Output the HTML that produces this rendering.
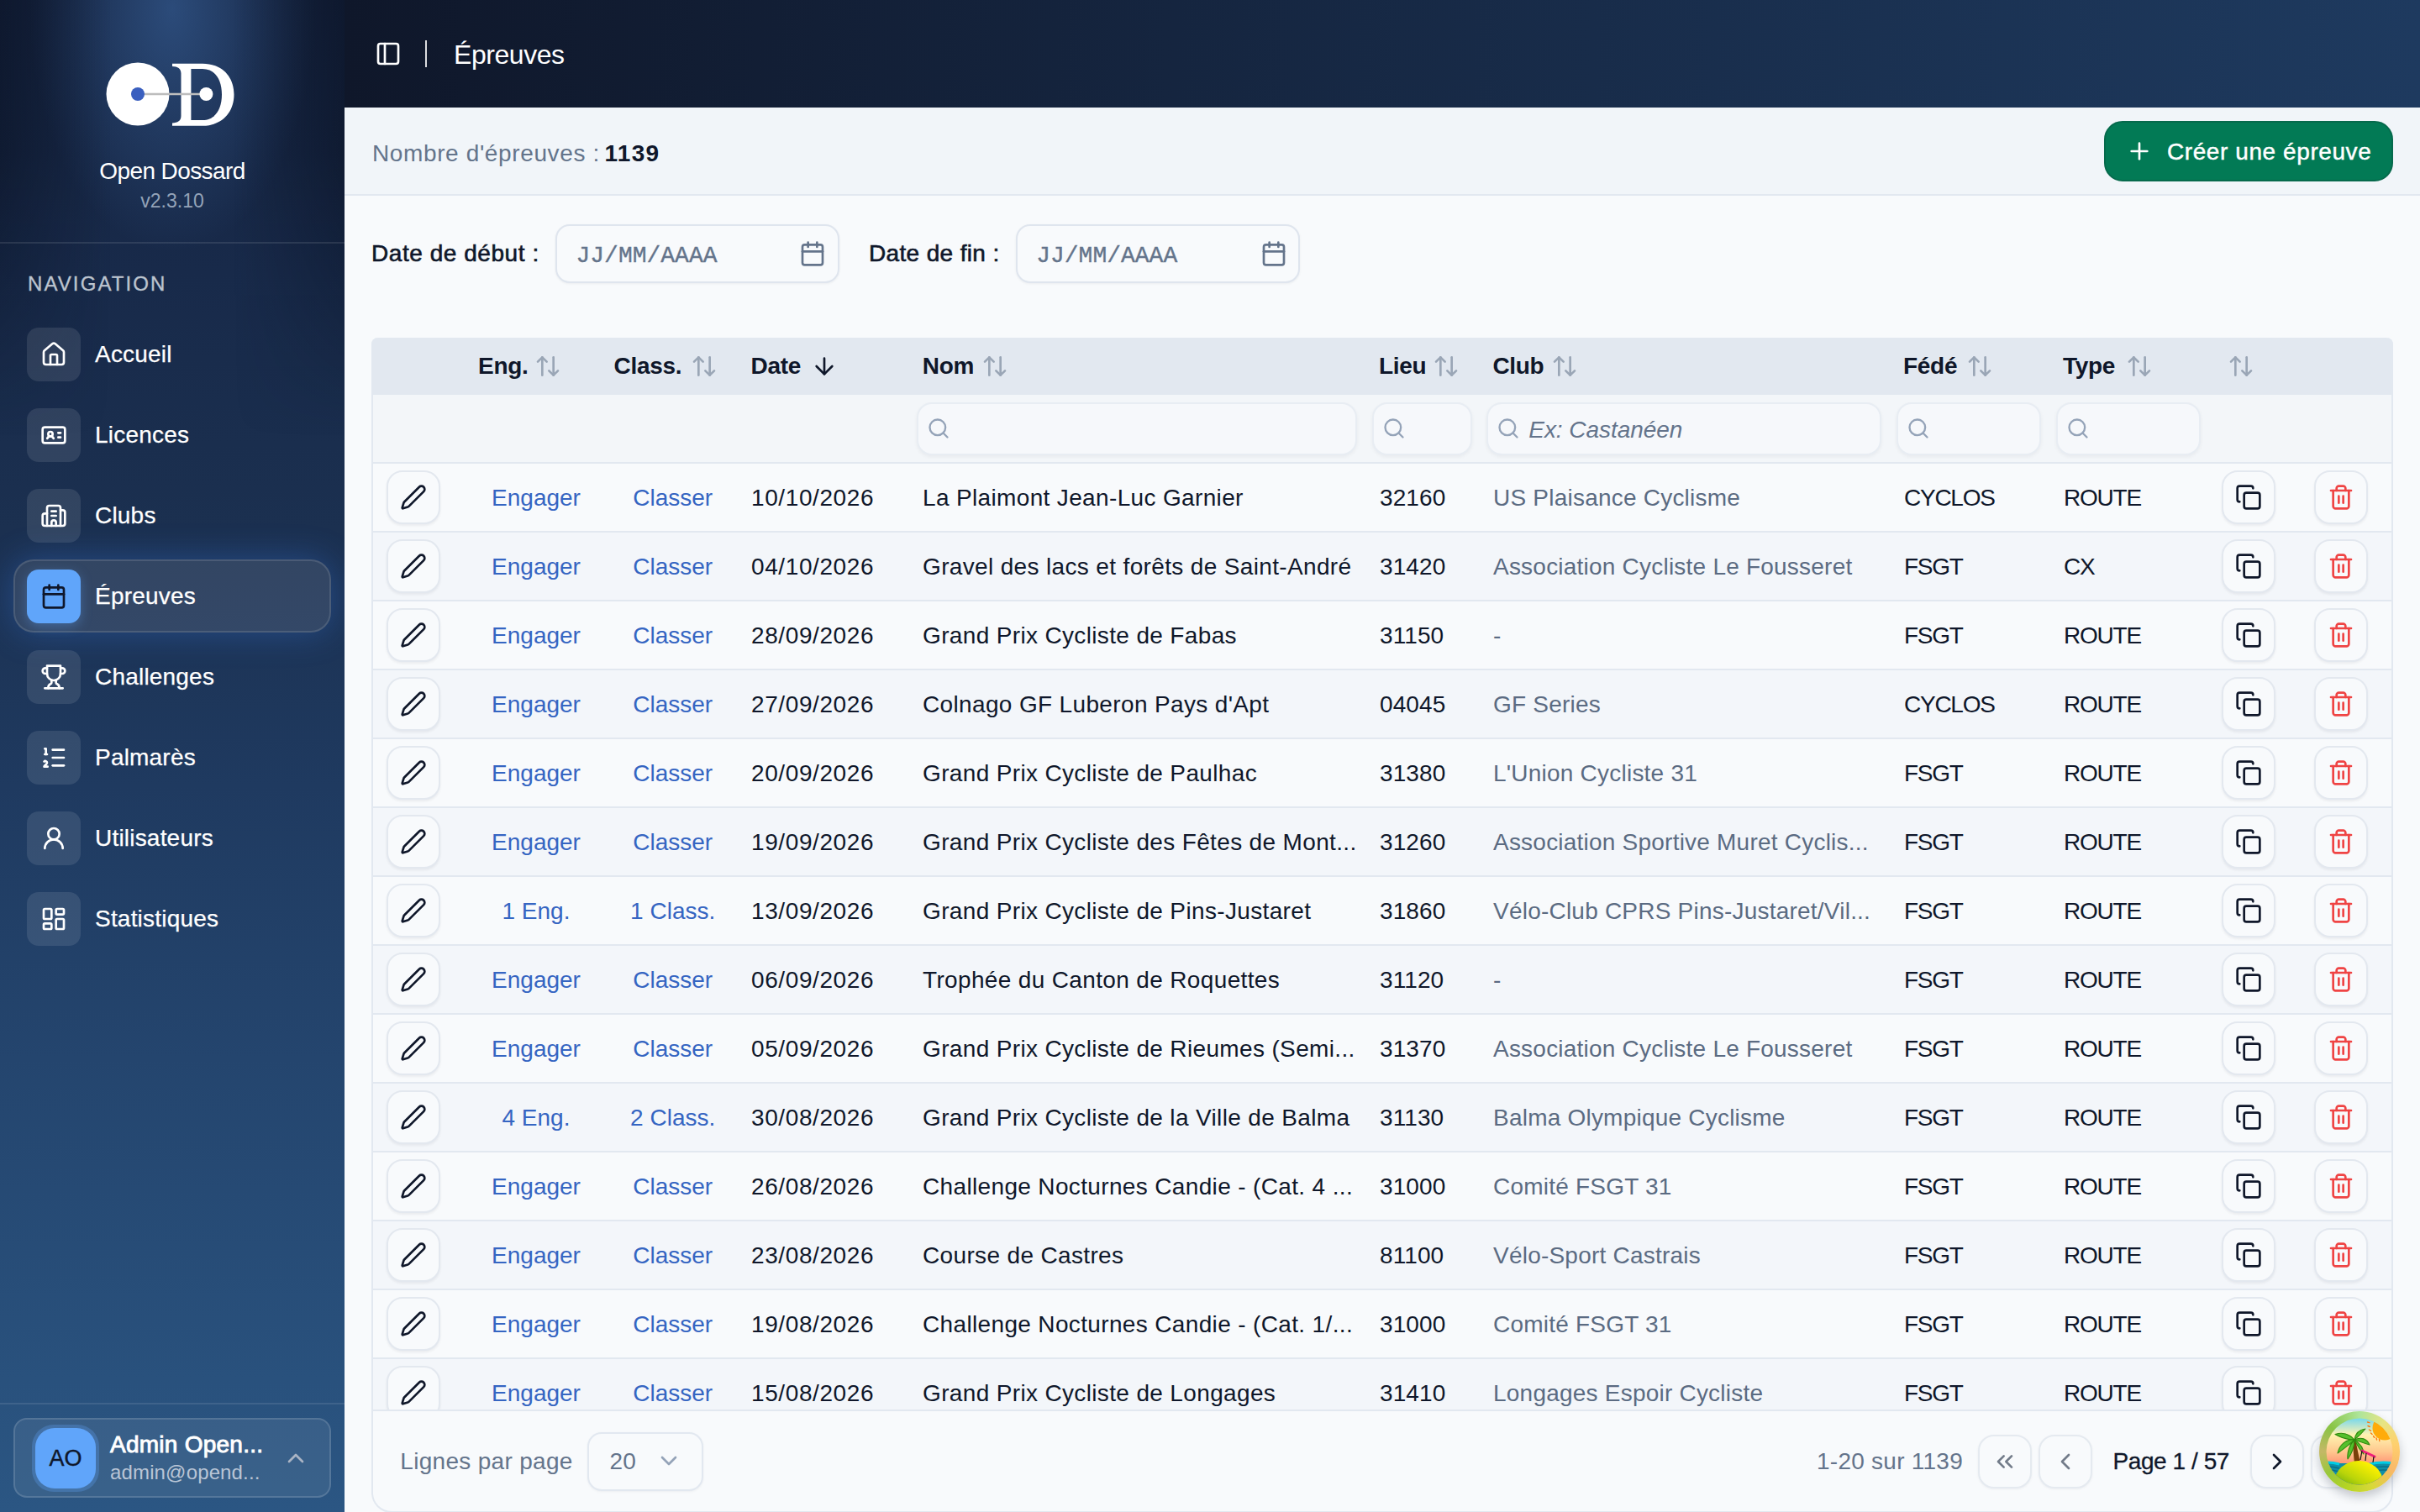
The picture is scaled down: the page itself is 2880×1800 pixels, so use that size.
<!DOCTYPE html>
<html><head><meta charset="utf-8"><title>Épreuves - Open Dossard</title>
<style>
html,body{margin:0;padding:0;}
body{width:2880px;height:1800px;position:relative;overflow:hidden;background:#f8fafc;font-family:"Liberation Sans",sans-serif;}
@media (max-width:2000px){html{zoom:0.5}}
.t{position:absolute;white-space:nowrap;line-height:1;}
.r{position:absolute;}
.ic{position:absolute;overflow:visible;}
.clip{position:absolute;overflow:hidden;}
#sb{position:absolute;left:0;top:0;width:410px;height:1800px;overflow:hidden;
 background:
  radial-gradient(ellipse 170px 290px at 205px 10px, rgba(62,108,170,0.55), rgba(62,108,170,0) 100%) 0 0/410px 500px no-repeat,
  linear-gradient(180deg,#15233f 0%,#182a4a 18%,#1b3050 35%,#1f3a60 52%,#24456e 70%,#2b5683 100%);}
#hd{position:absolute;left:410px;top:0;width:2470px;height:128px;background:linear-gradient(90deg,#0f172a 0%,#1e3a5f 100%);}
</style></head>
<body>
<div id="sb">
<div class="r" style="left:0px;top:0px;width:410px;height:520px;background:linear-gradient(90deg, rgba(6,11,24,0.42) 0%, rgba(6,11,24,0) 32%, rgba(6,11,24,0) 68%, rgba(6,11,24,0.42) 100%);-webkit-mask-image:linear-gradient(180deg,#000 0%,#000 35%,transparent 100%);mask-image:linear-gradient(180deg,#000 0%,#000 35%,transparent 100%)"></div>
<svg class="ic" style="left:110px;top:60px;width:190px;height:110px" viewBox="110 60 190 110">
<circle cx="164" cy="112" r="37.5" fill="#fff"/>
<path fill="#fff" d="M205 75.7 H241 C264 75.7 278.5 91 278.5 112.5 C278.5 134 264 149.7 241 149.7 H205 V146.5 C211.5 146 215.5 144 215.5 138 V87.5 C215.5 81.5 211.5 79.3 205 79 Z M227.4 82 V143 H241 C256 143 264 130 264 112.5 C264 95 256 82 241 82 Z"/>
<line x1="164" y1="112" x2="245.4" y2="112" stroke="#bdbdbd" stroke-width="2.6"/>
<circle cx="164" cy="112" r="8" fill="#3a5fbf"/>
<circle cx="245.4" cy="112" r="8" fill="#fff"/>
</svg>
<div class="t" style="left:-95.0px;width:600px;text-align:center;top:190.30px;font-size:28px;color:#ffffff;letter-spacing:-0.6px;">Open Dossard</div>
<div class="t" style="left:-95.0px;width:600px;text-align:center;top:227.53px;font-size:23px;color:#94a3b8;">v2.3.10</div>
<div class="r" style="left:0px;top:288px;width:410px;height:2px;background:rgba(255,255,255,0.10)"></div>
<div class="t " style="left:33px;top:326.38px;font-size:24px;color:#bcc4cf;letter-spacing:2.1px;-webkit-text-stroke:0.35px #bcc4cf;">NAVIGATION</div>
<div class="r" style="left:32px;top:390px;width:64px;height:64px;border-radius:14px;background:rgba(255,255,255,0.10)"></div>
<svg class="ic" style="left:48px;top:406px;width:32px;height:32px;" viewBox="0 0 24 24" fill="none" stroke="#ffffff" stroke-width="2" stroke-linecap="round" stroke-linejoin="round"><path d="M15 21v-8a1 1 0 0 0-1-1h-4a1 1 0 0 0-1 1v8"/><path d="M3 10a2 2 0 0 1 .709-1.528l7-5.999a2 2 0 0 1 2.582 0l7 5.999A2 2 0 0 1 21 10v9a2 2 0 0 1-2 2H5a2 2 0 0 1-2-2z"/></svg>
<div class="t " style="left:113px;top:408.30px;font-size:28px;color:#ffffff;letter-spacing:0.2px;-webkit-text-stroke:0.25px #ffffff;">Accueil</div>
<div class="r" style="left:32px;top:486px;width:64px;height:64px;border-radius:14px;background:rgba(255,255,255,0.10)"></div>
<svg class="ic" style="left:48px;top:502px;width:32px;height:32px;" viewBox="0 0 24 24" fill="none" stroke="#ffffff" stroke-width="2" stroke-linecap="round" stroke-linejoin="round"><path d="M16 10h2"/><path d="M16 14h2"/><path d="M6.17 15a3 3 0 0 1 5.66 0"/><circle cx="9" cy="11" r="2"/><rect x="2" y="5" width="20" height="14" rx="2"/></svg>
<div class="t " style="left:113px;top:504.30px;font-size:28px;color:#ffffff;letter-spacing:0.2px;-webkit-text-stroke:0.25px #ffffff;">Licences</div>
<div class="r" style="left:32px;top:582px;width:64px;height:64px;border-radius:14px;background:rgba(255,255,255,0.10)"></div>
<svg class="ic" style="left:48px;top:598px;width:32px;height:32px;" viewBox="0 0 24 24" fill="none" stroke="#ffffff" stroke-width="2" stroke-linecap="round" stroke-linejoin="round"><path d="M6 21V5a2 2 0 0 1 2-2h8a2 2 0 0 1 2 2v16"/><path d="M6 10H4a2 2 0 0 0-2 2v7a2 2 0 0 0 2 2h16a2 2 0 0 0 2-2V9a2 2 0 0 0-2-2h-2"/><path d="M10 8h4"/><path d="M10 12h4"/><path d="M10 21v-3a2 2 0 0 1 4 0v3"/></svg>
<div class="t " style="left:113px;top:600.30px;font-size:28px;color:#ffffff;letter-spacing:0.2px;-webkit-text-stroke:0.25px #ffffff;">Clubs</div>
<div class="r" style="left:16px;top:666px;width:378px;height:87px;border-radius:24px;background:rgba(255,255,255,0.10);border:2px solid rgba(255,255,255,0.12);box-sizing:border-box;box-shadow:0 0 40px rgba(59,130,246,0.32)"></div>
<div class="r" style="left:32px;top:678px;width:64px;height:64px;border-radius:14px;background:#60a5fa;box-shadow:0 4px 14px rgba(96,165,250,0.35)"></div>
<svg class="ic" style="left:48px;top:694px;width:32px;height:32px;" viewBox="0 0 24 24" fill="none" stroke="#0f172a" stroke-width="2" stroke-linecap="round" stroke-linejoin="round"><path d="M8 2v4"/><path d="M16 2v4"/><rect width="18" height="18" x="3" y="4" rx="2"/><path d="M3 10h18"/></svg>
<div class="t " style="left:113px;top:696.30px;font-size:28px;color:#ffffff;letter-spacing:0.2px;-webkit-text-stroke:0.25px #ffffff;">Épreuves</div>
<div class="r" style="left:32px;top:774px;width:64px;height:64px;border-radius:14px;background:rgba(255,255,255,0.10)"></div>
<svg class="ic" style="left:48px;top:790px;width:32px;height:32px;" viewBox="0 0 24 24" fill="none" stroke="#ffffff" stroke-width="2" stroke-linecap="round" stroke-linejoin="round"><path d="M6 9H4.5a2.5 2.5 0 0 1 0-5H6"/><path d="M18 9h1.5a2.5 2.5 0 0 0 0-5H18"/><path d="M4 22h16"/><path d="M10 14.66V17c0 .55-.47.98-.97 1.21C7.85 18.75 7 20.24 7 22"/><path d="M14 14.66V17c0 .55.47.98.97 1.21C16.15 18.75 17 20.24 17 22"/><path d="M18 2H6v7a6 6 0 0 0 12 0V2Z"/></svg>
<div class="t " style="left:113px;top:792.30px;font-size:28px;color:#ffffff;letter-spacing:0.2px;-webkit-text-stroke:0.25px #ffffff;">Challenges</div>
<div class="r" style="left:32px;top:870px;width:64px;height:64px;border-radius:14px;background:rgba(255,255,255,0.10)"></div>
<svg class="ic" style="left:48px;top:886px;width:32px;height:32px;" viewBox="0 0 24 24" fill="none" stroke="#ffffff" stroke-width="2" stroke-linecap="round" stroke-linejoin="round"><path d="M11 5h10"/><path d="M11 12h10"/><path d="M11 19h10"/><path d="M4 4h1v5"/><path d="M4 9h2"/><path d="M6.5 20H3.4c0-1 2.6-1.925 2.6-3.5a1.5 1.5 0 0 0-2.6-1.02"/></svg>
<div class="t " style="left:113px;top:888.30px;font-size:28px;color:#ffffff;letter-spacing:0.2px;-webkit-text-stroke:0.25px #ffffff;">Palmarès</div>
<div class="r" style="left:32px;top:966px;width:64px;height:64px;border-radius:14px;background:rgba(255,255,255,0.10)"></div>
<svg class="ic" style="left:48px;top:982px;width:32px;height:32px;" viewBox="0 0 24 24" fill="none" stroke="#ffffff" stroke-width="2" stroke-linecap="round" stroke-linejoin="round"><circle cx="12" cy="8" r="5"/><path d="M20 21a8 8 0 0 0-16 0"/></svg>
<div class="t " style="left:113px;top:984.30px;font-size:28px;color:#ffffff;letter-spacing:0.2px;-webkit-text-stroke:0.25px #ffffff;">Utilisateurs</div>
<div class="r" style="left:32px;top:1062px;width:64px;height:64px;border-radius:14px;background:rgba(255,255,255,0.10)"></div>
<svg class="ic" style="left:48px;top:1078px;width:32px;height:32px;" viewBox="0 0 24 24" fill="none" stroke="#ffffff" stroke-width="2" stroke-linecap="round" stroke-linejoin="round"><rect width="7" height="9" x="3" y="3" rx="1"/><rect width="7" height="5" x="14" y="3" rx="1"/><rect width="7" height="9" x="14" y="12" rx="1"/><rect width="7" height="5" x="3" y="16" rx="1"/></svg>
<div class="t " style="left:113px;top:1080.30px;font-size:28px;color:#ffffff;letter-spacing:0.2px;-webkit-text-stroke:0.25px #ffffff;">Statistiques</div>
<div class="r" style="left:0px;top:1670px;width:410px;height:2px;background:rgba(255,255,255,0.10)"></div>
<div class="r" style="left:16px;top:1688px;width:378px;height:95px;border-radius:16px;background:rgba(255,255,255,0.07);border:2px solid rgba(255,255,255,0.14);box-sizing:border-box"></div>
<div class="r" style="left:38px;top:1696px;width:80px;height:80px;border-radius:26px;background:rgba(96,165,250,0.28)"></div>
<div class="r" style="left:42px;top:1700px;width:72px;height:72px;border-radius:23px;background:#60a5fa"></div>
<div class="t" style="left:42.0px;width:72px;text-align:center;top:1722.64px;font-size:27px;color:#0f172a;-webkit-text-stroke:0.4px #0f172a;">AO</div>
<div class="t " style="left:131px;top:1706.30px;font-size:28px;color:#ffffff;letter-spacing:0.25px;-webkit-text-stroke:0.9px #ffffff;">Admin Open...</div>
<div class="t " style="left:131px;top:1740.68px;font-size:24px;color:#b9c5d6;letter-spacing:0.15px;">admin@opend...</div>
<svg class="ic" style="left:336.3px;top:1720.3px;width:32px;height:32px;" viewBox="0 0 24 24" fill="none" stroke="#aab4c4" stroke-width="2" stroke-linecap="round" stroke-linejoin="round"><path d="m18 15-6-6-6 6"/></svg>
</div>
<div id="hd"></div>
<svg class="ic" style="left:446px;top:48px;width:32px;height:32px;" viewBox="0 0 24 24" fill="none" stroke="#ffffff" stroke-width="2" stroke-linecap="round" stroke-linejoin="round"><rect width="18" height="18" x="3" y="3" rx="2"/><path d="M9 3v18"/></svg>
<div class="r" style="left:506px;top:48px;width:2px;height:32px;background:rgba(255,255,255,0.85)"></div>
<div class="t " style="left:540px;top:48.91px;font-size:32px;color:#ffffff;letter-spacing:-0.45px;">Épreuves</div>
<div class="r" style="left:410px;top:128px;width:2470px;height:104px;background:#f1f5f9"></div>
<div class="r" style="left:410px;top:231px;width:2470px;height:2px;background:#e2e8f0"></div>
<div class="t " style="left:443px;top:168.50px;font-size:28px;color:#64748b;letter-spacing:0.62px;">Nombre d'épreuves :</div>
<div class="t " style="left:719.5px;top:168.50px;font-size:28px;color:#0f172a;font-weight:bold;letter-spacing:1.3px;">1139</div>
<div class="r" style="left:2504px;top:144px;width:344px;height:72px;border-radius:22px;background:#027a55;border:2px solid #066a4c;box-sizing:border-box"></div>
<svg class="ic" style="left:2530px;top:164px;width:32px;height:32px;" viewBox="0 0 24 24" fill="none" stroke="#ffffff" stroke-width="2" stroke-linecap="round" stroke-linejoin="round"><path d="M5 12h14"/><path d="M12 5v14"/></svg>
<div class="t " style="left:2579px;top:167.10px;font-size:28px;color:#ffffff;letter-spacing:0.58px;-webkit-text-stroke:0.45px #ffffff;">Créer une épreuve</div>
<div class="t " style="left:442px;top:288.30px;font-size:28px;color:#0f172a;letter-spacing:0.55px;-webkit-text-stroke:0.6px #0f172a;">Date de début :</div>
<div class="r" style="left:661px;top:267px;width:338px;height:70px;border-radius:17px;background:#f8fafc;border:2px solid #dfe5ee;box-sizing:border-box;box-shadow:0 1px 3px rgba(15,23,42,0.06)"></div>
<div class="t " style="left:685.5px;top:290.90px;font-size:28px;color:#64748b;font-family:'Liberation Mono',monospace;-webkit-text-stroke:0.35px #64748b;">JJ/MM/AAAA</div>
<svg class="ic" style="left:951px;top:286px;width:32px;height:32px;" viewBox="0 0 24 24" fill="none" stroke="#64748b" stroke-width="2" stroke-linecap="round" stroke-linejoin="round"><path d="M8 2v4"/><path d="M16 2v4"/><rect width="18" height="18" x="3" y="4" rx="2"/><path d="M3 10h18"/></svg>
<div class="t " style="left:1034px;top:288.30px;font-size:28px;color:#0f172a;letter-spacing:0.35px;-webkit-text-stroke:0.6px #0f172a;">Date de fin :</div>
<div class="r" style="left:1209px;top:267px;width:338px;height:70px;border-radius:17px;background:#f8fafc;border:2px solid #dfe5ee;box-sizing:border-box;box-shadow:0 1px 3px rgba(15,23,42,0.06)"></div>
<div class="t " style="left:1233.2px;top:290.90px;font-size:28px;color:#64748b;font-family:'Liberation Mono',monospace;-webkit-text-stroke:0.35px #64748b;">JJ/MM/AAAA</div>
<svg class="ic" style="left:1500px;top:286px;width:32px;height:32px;" viewBox="0 0 24 24" fill="none" stroke="#64748b" stroke-width="2" stroke-linecap="round" stroke-linejoin="round"><path d="M8 2v4"/><path d="M16 2v4"/><rect width="18" height="18" x="3" y="4" rx="2"/><path d="M3 10h18"/></svg>
<div class="r" style="left:442px;top:402px;width:2406px;height:1399px;border-radius:8px 8px 24px 24px;border:2px solid #e2e8f0;border-top:none;box-sizing:border-box;background:#f8fafc"></div>
<div class="r" style="left:442px;top:402px;width:2406px;height:68px;background:#e2e8f0;border-radius:8px 8px 0 0"></div>
<div class="r" style="left:444px;top:470px;width:2402px;height:80px;background:#f3f6f9"></div>
<div class="r" style="left:444px;top:550px;width:2402px;height:2px;background:#e2e8f0"></div>
<div class="t " style="left:569px;top:422.00px;font-size:28px;color:#0f172a;font-weight:bold;letter-spacing:-0.3px;">Eng.</div>
<svg class="ic" style="left:636px;top:420px;width:32px;height:32px;" viewBox="0 0 24 24" fill="none" stroke="#9aa6b6" stroke-width="2" stroke-linecap="round" stroke-linejoin="round"><path d="m21 16-4 4-4-4"/><path d="M17 20V4"/><path d="m3 8 4-4 4 4"/><path d="M7 4v16"/></svg>
<div class="t " style="left:730.6px;top:422.00px;font-size:28px;color:#0f172a;font-weight:bold;letter-spacing:-0.3px;">Class.</div>
<svg class="ic" style="left:822px;top:420px;width:32px;height:32px;" viewBox="0 0 24 24" fill="none" stroke="#9aa6b6" stroke-width="2" stroke-linecap="round" stroke-linejoin="round"><path d="m21 16-4 4-4-4"/><path d="M17 20V4"/><path d="m3 8 4-4 4 4"/><path d="M7 4v16"/></svg>
<div class="t " style="left:893.6px;top:422.00px;font-size:28px;color:#0f172a;font-weight:bold;letter-spacing:-0.3px;">Date</div>
<svg class="ic" style="left:964.7px;top:420px;width:32px;height:32px;" viewBox="0 0 24 24" fill="none" stroke="#0f172a" stroke-width="2" stroke-linecap="round" stroke-linejoin="round"><path d="M12 5v14"/><path d="m19 12-7 7-7-7"/></svg>
<div class="t " style="left:1097.8px;top:422.00px;font-size:28px;color:#0f172a;font-weight:bold;letter-spacing:-0.3px;">Nom</div>
<svg class="ic" style="left:1168.4px;top:420px;width:32px;height:32px;" viewBox="0 0 24 24" fill="none" stroke="#9aa6b6" stroke-width="2" stroke-linecap="round" stroke-linejoin="round"><path d="m21 16-4 4-4-4"/><path d="M17 20V4"/><path d="m3 8 4-4 4 4"/><path d="M7 4v16"/></svg>
<div class="t " style="left:1641px;top:422.00px;font-size:28px;color:#0f172a;font-weight:bold;letter-spacing:-0.3px;">Lieu</div>
<svg class="ic" style="left:1705px;top:420px;width:32px;height:32px;" viewBox="0 0 24 24" fill="none" stroke="#9aa6b6" stroke-width="2" stroke-linecap="round" stroke-linejoin="round"><path d="m21 16-4 4-4-4"/><path d="M17 20V4"/><path d="m3 8 4-4 4 4"/><path d="M7 4v16"/></svg>
<div class="t " style="left:1776.4px;top:422.00px;font-size:28px;color:#0f172a;font-weight:bold;letter-spacing:-0.3px;">Club</div>
<svg class="ic" style="left:1845.6px;top:420px;width:32px;height:32px;" viewBox="0 0 24 24" fill="none" stroke="#9aa6b6" stroke-width="2" stroke-linecap="round" stroke-linejoin="round"><path d="m21 16-4 4-4-4"/><path d="M17 20V4"/><path d="m3 8 4-4 4 4"/><path d="M7 4v16"/></svg>
<div class="t " style="left:2265px;top:422.00px;font-size:28px;color:#0f172a;font-weight:bold;letter-spacing:-0.3px;">Fédé</div>
<svg class="ic" style="left:2340.4px;top:420px;width:32px;height:32px;" viewBox="0 0 24 24" fill="none" stroke="#9aa6b6" stroke-width="2" stroke-linecap="round" stroke-linejoin="round"><path d="m21 16-4 4-4-4"/><path d="M17 20V4"/><path d="m3 8 4-4 4 4"/><path d="M7 4v16"/></svg>
<div class="t " style="left:2455px;top:422.00px;font-size:28px;color:#0f172a;font-weight:bold;letter-spacing:-0.3px;">Type</div>
<svg class="ic" style="left:2530.4px;top:420px;width:32px;height:32px;" viewBox="0 0 24 24" fill="none" stroke="#9aa6b6" stroke-width="2" stroke-linecap="round" stroke-linejoin="round"><path d="m21 16-4 4-4-4"/><path d="M17 20V4"/><path d="m3 8 4-4 4 4"/><path d="M7 4v16"/></svg>
<svg class="ic" style="left:2651.4px;top:420px;width:32px;height:32px;" viewBox="0 0 24 24" fill="none" stroke="#9aa6b6" stroke-width="2" stroke-linecap="round" stroke-linejoin="round"><path d="m21 16-4 4-4-4"/><path d="M17 20V4"/><path d="m3 8 4-4 4 4"/><path d="M7 4v16"/></svg>
<div class="r" style="left:1091px;top:479px;width:524px;height:63px;border-radius:18px;background:#f6f8fb;border:2px solid #e8edf3;box-sizing:border-box;box-shadow:0 2px 4px rgba(15,23,42,0.05)"></div>
<svg class="ic" style="left:1103px;top:496px;width:28px;height:28px;" viewBox="0 0 24 24" fill="none" stroke="#94a3b8" stroke-width="2" stroke-linecap="round" stroke-linejoin="round"><circle cx="11" cy="11" r="8"/><path d="m21 21-4.3-4.3"/></svg>
<div class="r" style="left:1633px;top:479px;width:119px;height:63px;border-radius:18px;background:#f6f8fb;border:2px solid #e8edf3;box-sizing:border-box;box-shadow:0 2px 4px rgba(15,23,42,0.05)"></div>
<svg class="ic" style="left:1645px;top:496px;width:28px;height:28px;" viewBox="0 0 24 24" fill="none" stroke="#94a3b8" stroke-width="2" stroke-linecap="round" stroke-linejoin="round"><circle cx="11" cy="11" r="8"/><path d="m21 21-4.3-4.3"/></svg>
<div class="r" style="left:1769px;top:479px;width:470px;height:63px;border-radius:18px;background:#f6f8fb;border:2px solid #e8edf3;box-sizing:border-box;box-shadow:0 2px 4px rgba(15,23,42,0.05)"></div>
<svg class="ic" style="left:1781px;top:496px;width:28px;height:28px;" viewBox="0 0 24 24" fill="none" stroke="#94a3b8" stroke-width="2" stroke-linecap="round" stroke-linejoin="round"><circle cx="11" cy="11" r="8"/><path d="m21 21-4.3-4.3"/></svg>
<div class="r" style="left:2257px;top:479px;width:172px;height:63px;border-radius:18px;background:#f6f8fb;border:2px solid #e8edf3;box-sizing:border-box;box-shadow:0 2px 4px rgba(15,23,42,0.05)"></div>
<svg class="ic" style="left:2269px;top:496px;width:28px;height:28px;" viewBox="0 0 24 24" fill="none" stroke="#94a3b8" stroke-width="2" stroke-linecap="round" stroke-linejoin="round"><circle cx="11" cy="11" r="8"/><path d="m21 21-4.3-4.3"/></svg>
<div class="r" style="left:2447px;top:479px;width:172px;height:63px;border-radius:18px;background:#f6f8fb;border:2px solid #e8edf3;box-sizing:border-box;box-shadow:0 2px 4px rgba(15,23,42,0.05)"></div>
<svg class="ic" style="left:2459px;top:496px;width:28px;height:28px;" viewBox="0 0 24 24" fill="none" stroke="#94a3b8" stroke-width="2" stroke-linecap="round" stroke-linejoin="round"><circle cx="11" cy="11" r="8"/><path d="m21 21-4.3-4.3"/></svg>
<div class="t " style="left:1819.3px;top:498.30px;font-size:28px;color:#64748b;letter-spacing:-0.05px;font-style:italic;">Ex: Castanéen</div>
<div class="clip" style="left:444px;top:552px;width:2402px;height:1126px;">
<div class="r" style="left:0px;top:0px;width:2402px;height:80px;background:#f8fafc"></div><div class="r" style="left:0px;top:80px;width:2402px;height:2px;background:#e2e8f0"></div><div class="r" style="left:16px;top:8px;width:64px;height:64px;border-radius:19px;background:#f8fafc;border:2px solid #e3e8ef;box-sizing:border-box;box-shadow:0 2px 3px rgba(15,23,42,0.06)"></div><svg class="ic" style="left:32px;top:24px;width:32px;height:32px;" viewBox="0 0 24 24" fill="none" stroke="#0f172a" stroke-width="2" stroke-linecap="round" stroke-linejoin="round"><path d="M21.174 6.812a1 1 0 0 0-3.986-3.987L3.842 16.174a2 2 0 0 0-.5.83l-1.321 4.352a.5.5 0 0 0 .623.622l4.353-1.32a2 2 0 0 0 .83-.497z"/></svg><div class="t" style="left:114.0px;width:160px;text-align:center;top:26.80px;font-size:28px;color:#3565c2;">Engager</div><div class="t" style="left:276.70000000000005px;width:160px;text-align:center;top:26.80px;font-size:28px;color:#3565c2;">Classer</div><div class="t " style="left:450px;top:26.80px;font-size:28px;color:#0f172a;letter-spacing:0.6px;">10/10/2026</div><div class="t " style="left:654px;top:26.80px;font-size:28px;color:#0f172a;letter-spacing:0.35px;">La Plaimont Jean-Luc Garnier</div><div class="t " style="left:1198px;top:26.80px;font-size:28px;color:#0f172a;letter-spacing:0.1px;">32160</div><div class="t " style="left:1333px;top:26.80px;font-size:28px;color:#5b6b82;letter-spacing:0.22px;">US Plaisance Cyclisme</div><div class="t " style="left:1822px;top:26.80px;font-size:28px;color:#0f172a;letter-spacing:-1.25px;">CYCLOS</div><div class="t " style="left:2012px;top:26.80px;font-size:28px;color:#0f172a;letter-spacing:-1.2px;">ROUTE</div><div class="r" style="left:2199.5px;top:8px;width:64px;height:64px;border-radius:19px;background:#f8fafc;border:2px solid #e3e8ef;box-sizing:border-box;box-shadow:0 2px 3px rgba(15,23,42,0.06)"></div><svg class="ic" style="left:2215.5px;top:24px;width:32px;height:32px;" viewBox="0 0 24 24" fill="none" stroke="#0f172a" stroke-width="2" stroke-linecap="round" stroke-linejoin="round"><rect width="14" height="14" x="8" y="8" rx="2" ry="2"/><path d="M4 16c-1.1 0-2-.9-2-2V4c0-1.1.9-2 2-2h10c1.1 0 2 .9 2 2"/></svg><div class="r" style="left:2309.5px;top:8px;width:64px;height:64px;border-radius:19px;background:#f8fafc;border:2px solid #e3e8ef;box-sizing:border-box;box-shadow:0 2px 3px rgba(15,23,42,0.06)"></div><svg class="ic" style="left:2325.5px;top:24px;width:32px;height:32px;" viewBox="0 0 24 24" fill="none" stroke="#ef4444" stroke-width="2" stroke-linecap="round" stroke-linejoin="round"><path d="M3 6h18"/><path d="M19 6v14c0 1-1 2-2 2H7c-1 0-2-1-2-2V6"/><path d="M8 6V4c0-1 1-2 2-2h4c1 0 2 1 2 2v2"/><path d="M10 11v6"/><path d="M14 11v6"/></svg>
<div class="r" style="left:0px;top:82px;width:2402px;height:80px;background:#f3f6fa"></div><div class="r" style="left:0px;top:162px;width:2402px;height:2px;background:#e2e8f0"></div><div class="r" style="left:16px;top:90px;width:64px;height:64px;border-radius:19px;background:#f8fafc;border:2px solid #e3e8ef;box-sizing:border-box;box-shadow:0 2px 3px rgba(15,23,42,0.06)"></div><svg class="ic" style="left:32px;top:106px;width:32px;height:32px;" viewBox="0 0 24 24" fill="none" stroke="#0f172a" stroke-width="2" stroke-linecap="round" stroke-linejoin="round"><path d="M21.174 6.812a1 1 0 0 0-3.986-3.987L3.842 16.174a2 2 0 0 0-.5.83l-1.321 4.352a.5.5 0 0 0 .623.622l4.353-1.32a2 2 0 0 0 .83-.497z"/></svg><div class="t" style="left:114.0px;width:160px;text-align:center;top:108.80px;font-size:28px;color:#3565c2;">Engager</div><div class="t" style="left:276.70000000000005px;width:160px;text-align:center;top:108.80px;font-size:28px;color:#3565c2;">Classer</div><div class="t " style="left:450px;top:108.80px;font-size:28px;color:#0f172a;letter-spacing:0.6px;">04/10/2026</div><div class="t " style="left:654px;top:108.80px;font-size:28px;color:#0f172a;letter-spacing:0.35px;">Gravel des lacs et forêts de Saint-André</div><div class="t " style="left:1198px;top:108.80px;font-size:28px;color:#0f172a;letter-spacing:0.1px;">31420</div><div class="t " style="left:1333px;top:108.80px;font-size:28px;color:#5b6b82;letter-spacing:0.22px;">Association Cycliste Le Fousseret</div><div class="t " style="left:1822px;top:108.80px;font-size:28px;color:#0f172a;letter-spacing:-1.25px;">FSGT</div><div class="t " style="left:2012px;top:108.80px;font-size:28px;color:#0f172a;letter-spacing:-1.2px;">CX</div><div class="r" style="left:2199.5px;top:90px;width:64px;height:64px;border-radius:19px;background:#f8fafc;border:2px solid #e3e8ef;box-sizing:border-box;box-shadow:0 2px 3px rgba(15,23,42,0.06)"></div><svg class="ic" style="left:2215.5px;top:106px;width:32px;height:32px;" viewBox="0 0 24 24" fill="none" stroke="#0f172a" stroke-width="2" stroke-linecap="round" stroke-linejoin="round"><rect width="14" height="14" x="8" y="8" rx="2" ry="2"/><path d="M4 16c-1.1 0-2-.9-2-2V4c0-1.1.9-2 2-2h10c1.1 0 2 .9 2 2"/></svg><div class="r" style="left:2309.5px;top:90px;width:64px;height:64px;border-radius:19px;background:#f8fafc;border:2px solid #e3e8ef;box-sizing:border-box;box-shadow:0 2px 3px rgba(15,23,42,0.06)"></div><svg class="ic" style="left:2325.5px;top:106px;width:32px;height:32px;" viewBox="0 0 24 24" fill="none" stroke="#ef4444" stroke-width="2" stroke-linecap="round" stroke-linejoin="round"><path d="M3 6h18"/><path d="M19 6v14c0 1-1 2-2 2H7c-1 0-2-1-2-2V6"/><path d="M8 6V4c0-1 1-2 2-2h4c1 0 2 1 2 2v2"/><path d="M10 11v6"/><path d="M14 11v6"/></svg>
<div class="r" style="left:0px;top:164px;width:2402px;height:80px;background:#f8fafc"></div><div class="r" style="left:0px;top:244px;width:2402px;height:2px;background:#e2e8f0"></div><div class="r" style="left:16px;top:172px;width:64px;height:64px;border-radius:19px;background:#f8fafc;border:2px solid #e3e8ef;box-sizing:border-box;box-shadow:0 2px 3px rgba(15,23,42,0.06)"></div><svg class="ic" style="left:32px;top:188px;width:32px;height:32px;" viewBox="0 0 24 24" fill="none" stroke="#0f172a" stroke-width="2" stroke-linecap="round" stroke-linejoin="round"><path d="M21.174 6.812a1 1 0 0 0-3.986-3.987L3.842 16.174a2 2 0 0 0-.5.83l-1.321 4.352a.5.5 0 0 0 .623.622l4.353-1.32a2 2 0 0 0 .83-.497z"/></svg><div class="t" style="left:114.0px;width:160px;text-align:center;top:190.80px;font-size:28px;color:#3565c2;">Engager</div><div class="t" style="left:276.70000000000005px;width:160px;text-align:center;top:190.80px;font-size:28px;color:#3565c2;">Classer</div><div class="t " style="left:450px;top:190.80px;font-size:28px;color:#0f172a;letter-spacing:0.6px;">28/09/2026</div><div class="t " style="left:654px;top:190.80px;font-size:28px;color:#0f172a;letter-spacing:0.35px;">Grand Prix Cycliste de Fabas</div><div class="t " style="left:1198px;top:190.80px;font-size:28px;color:#0f172a;letter-spacing:0.1px;">31150</div><div class="t " style="left:1333px;top:190.80px;font-size:28px;color:#5b6b82;letter-spacing:0.22px;">-</div><div class="t " style="left:1822px;top:190.80px;font-size:28px;color:#0f172a;letter-spacing:-1.25px;">FSGT</div><div class="t " style="left:2012px;top:190.80px;font-size:28px;color:#0f172a;letter-spacing:-1.2px;">ROUTE</div><div class="r" style="left:2199.5px;top:172px;width:64px;height:64px;border-radius:19px;background:#f8fafc;border:2px solid #e3e8ef;box-sizing:border-box;box-shadow:0 2px 3px rgba(15,23,42,0.06)"></div><svg class="ic" style="left:2215.5px;top:188px;width:32px;height:32px;" viewBox="0 0 24 24" fill="none" stroke="#0f172a" stroke-width="2" stroke-linecap="round" stroke-linejoin="round"><rect width="14" height="14" x="8" y="8" rx="2" ry="2"/><path d="M4 16c-1.1 0-2-.9-2-2V4c0-1.1.9-2 2-2h10c1.1 0 2 .9 2 2"/></svg><div class="r" style="left:2309.5px;top:172px;width:64px;height:64px;border-radius:19px;background:#f8fafc;border:2px solid #e3e8ef;box-sizing:border-box;box-shadow:0 2px 3px rgba(15,23,42,0.06)"></div><svg class="ic" style="left:2325.5px;top:188px;width:32px;height:32px;" viewBox="0 0 24 24" fill="none" stroke="#ef4444" stroke-width="2" stroke-linecap="round" stroke-linejoin="round"><path d="M3 6h18"/><path d="M19 6v14c0 1-1 2-2 2H7c-1 0-2-1-2-2V6"/><path d="M8 6V4c0-1 1-2 2-2h4c1 0 2 1 2 2v2"/><path d="M10 11v6"/><path d="M14 11v6"/></svg>
<div class="r" style="left:0px;top:246px;width:2402px;height:80px;background:#f3f6fa"></div><div class="r" style="left:0px;top:326px;width:2402px;height:2px;background:#e2e8f0"></div><div class="r" style="left:16px;top:254px;width:64px;height:64px;border-radius:19px;background:#f8fafc;border:2px solid #e3e8ef;box-sizing:border-box;box-shadow:0 2px 3px rgba(15,23,42,0.06)"></div><svg class="ic" style="left:32px;top:270px;width:32px;height:32px;" viewBox="0 0 24 24" fill="none" stroke="#0f172a" stroke-width="2" stroke-linecap="round" stroke-linejoin="round"><path d="M21.174 6.812a1 1 0 0 0-3.986-3.987L3.842 16.174a2 2 0 0 0-.5.83l-1.321 4.352a.5.5 0 0 0 .623.622l4.353-1.32a2 2 0 0 0 .83-.497z"/></svg><div class="t" style="left:114.0px;width:160px;text-align:center;top:272.80px;font-size:28px;color:#3565c2;">Engager</div><div class="t" style="left:276.70000000000005px;width:160px;text-align:center;top:272.80px;font-size:28px;color:#3565c2;">Classer</div><div class="t " style="left:450px;top:272.80px;font-size:28px;color:#0f172a;letter-spacing:0.6px;">27/09/2026</div><div class="t " style="left:654px;top:272.80px;font-size:28px;color:#0f172a;letter-spacing:0.35px;">Colnago GF Luberon Pays d'Apt</div><div class="t " style="left:1198px;top:272.80px;font-size:28px;color:#0f172a;letter-spacing:0.1px;">04045</div><div class="t " style="left:1333px;top:272.80px;font-size:28px;color:#5b6b82;letter-spacing:0.22px;">GF Series</div><div class="t " style="left:1822px;top:272.80px;font-size:28px;color:#0f172a;letter-spacing:-1.25px;">CYCLOS</div><div class="t " style="left:2012px;top:272.80px;font-size:28px;color:#0f172a;letter-spacing:-1.2px;">ROUTE</div><div class="r" style="left:2199.5px;top:254px;width:64px;height:64px;border-radius:19px;background:#f8fafc;border:2px solid #e3e8ef;box-sizing:border-box;box-shadow:0 2px 3px rgba(15,23,42,0.06)"></div><svg class="ic" style="left:2215.5px;top:270px;width:32px;height:32px;" viewBox="0 0 24 24" fill="none" stroke="#0f172a" stroke-width="2" stroke-linecap="round" stroke-linejoin="round"><rect width="14" height="14" x="8" y="8" rx="2" ry="2"/><path d="M4 16c-1.1 0-2-.9-2-2V4c0-1.1.9-2 2-2h10c1.1 0 2 .9 2 2"/></svg><div class="r" style="left:2309.5px;top:254px;width:64px;height:64px;border-radius:19px;background:#f8fafc;border:2px solid #e3e8ef;box-sizing:border-box;box-shadow:0 2px 3px rgba(15,23,42,0.06)"></div><svg class="ic" style="left:2325.5px;top:270px;width:32px;height:32px;" viewBox="0 0 24 24" fill="none" stroke="#ef4444" stroke-width="2" stroke-linecap="round" stroke-linejoin="round"><path d="M3 6h18"/><path d="M19 6v14c0 1-1 2-2 2H7c-1 0-2-1-2-2V6"/><path d="M8 6V4c0-1 1-2 2-2h4c1 0 2 1 2 2v2"/><path d="M10 11v6"/><path d="M14 11v6"/></svg>
<div class="r" style="left:0px;top:328px;width:2402px;height:80px;background:#f8fafc"></div><div class="r" style="left:0px;top:408px;width:2402px;height:2px;background:#e2e8f0"></div><div class="r" style="left:16px;top:336px;width:64px;height:64px;border-radius:19px;background:#f8fafc;border:2px solid #e3e8ef;box-sizing:border-box;box-shadow:0 2px 3px rgba(15,23,42,0.06)"></div><svg class="ic" style="left:32px;top:352px;width:32px;height:32px;" viewBox="0 0 24 24" fill="none" stroke="#0f172a" stroke-width="2" stroke-linecap="round" stroke-linejoin="round"><path d="M21.174 6.812a1 1 0 0 0-3.986-3.987L3.842 16.174a2 2 0 0 0-.5.83l-1.321 4.352a.5.5 0 0 0 .623.622l4.353-1.32a2 2 0 0 0 .83-.497z"/></svg><div class="t" style="left:114.0px;width:160px;text-align:center;top:354.80px;font-size:28px;color:#3565c2;">Engager</div><div class="t" style="left:276.70000000000005px;width:160px;text-align:center;top:354.80px;font-size:28px;color:#3565c2;">Classer</div><div class="t " style="left:450px;top:354.80px;font-size:28px;color:#0f172a;letter-spacing:0.6px;">20/09/2026</div><div class="t " style="left:654px;top:354.80px;font-size:28px;color:#0f172a;letter-spacing:0.35px;">Grand Prix Cycliste de Paulhac</div><div class="t " style="left:1198px;top:354.80px;font-size:28px;color:#0f172a;letter-spacing:0.1px;">31380</div><div class="t " style="left:1333px;top:354.80px;font-size:28px;color:#5b6b82;letter-spacing:0.22px;">L'Union Cycliste 31</div><div class="t " style="left:1822px;top:354.80px;font-size:28px;color:#0f172a;letter-spacing:-1.25px;">FSGT</div><div class="t " style="left:2012px;top:354.80px;font-size:28px;color:#0f172a;letter-spacing:-1.2px;">ROUTE</div><div class="r" style="left:2199.5px;top:336px;width:64px;height:64px;border-radius:19px;background:#f8fafc;border:2px solid #e3e8ef;box-sizing:border-box;box-shadow:0 2px 3px rgba(15,23,42,0.06)"></div><svg class="ic" style="left:2215.5px;top:352px;width:32px;height:32px;" viewBox="0 0 24 24" fill="none" stroke="#0f172a" stroke-width="2" stroke-linecap="round" stroke-linejoin="round"><rect width="14" height="14" x="8" y="8" rx="2" ry="2"/><path d="M4 16c-1.1 0-2-.9-2-2V4c0-1.1.9-2 2-2h10c1.1 0 2 .9 2 2"/></svg><div class="r" style="left:2309.5px;top:336px;width:64px;height:64px;border-radius:19px;background:#f8fafc;border:2px solid #e3e8ef;box-sizing:border-box;box-shadow:0 2px 3px rgba(15,23,42,0.06)"></div><svg class="ic" style="left:2325.5px;top:352px;width:32px;height:32px;" viewBox="0 0 24 24" fill="none" stroke="#ef4444" stroke-width="2" stroke-linecap="round" stroke-linejoin="round"><path d="M3 6h18"/><path d="M19 6v14c0 1-1 2-2 2H7c-1 0-2-1-2-2V6"/><path d="M8 6V4c0-1 1-2 2-2h4c1 0 2 1 2 2v2"/><path d="M10 11v6"/><path d="M14 11v6"/></svg>
<div class="r" style="left:0px;top:410px;width:2402px;height:80px;background:#f3f6fa"></div><div class="r" style="left:0px;top:490px;width:2402px;height:2px;background:#e2e8f0"></div><div class="r" style="left:16px;top:418px;width:64px;height:64px;border-radius:19px;background:#f8fafc;border:2px solid #e3e8ef;box-sizing:border-box;box-shadow:0 2px 3px rgba(15,23,42,0.06)"></div><svg class="ic" style="left:32px;top:434px;width:32px;height:32px;" viewBox="0 0 24 24" fill="none" stroke="#0f172a" stroke-width="2" stroke-linecap="round" stroke-linejoin="round"><path d="M21.174 6.812a1 1 0 0 0-3.986-3.987L3.842 16.174a2 2 0 0 0-.5.83l-1.321 4.352a.5.5 0 0 0 .623.622l4.353-1.32a2 2 0 0 0 .83-.497z"/></svg><div class="t" style="left:114.0px;width:160px;text-align:center;top:436.80px;font-size:28px;color:#3565c2;">Engager</div><div class="t" style="left:276.70000000000005px;width:160px;text-align:center;top:436.80px;font-size:28px;color:#3565c2;">Classer</div><div class="t " style="left:450px;top:436.80px;font-size:28px;color:#0f172a;letter-spacing:0.6px;">19/09/2026</div><div class="t " style="left:654px;top:436.80px;font-size:28px;color:#0f172a;letter-spacing:0.35px;">Grand Prix Cycliste des Fêtes de Mont...</div><div class="t " style="left:1198px;top:436.80px;font-size:28px;color:#0f172a;letter-spacing:0.1px;">31260</div><div class="t " style="left:1333px;top:436.80px;font-size:28px;color:#5b6b82;letter-spacing:0.22px;">Association Sportive Muret Cyclis...</div><div class="t " style="left:1822px;top:436.80px;font-size:28px;color:#0f172a;letter-spacing:-1.25px;">FSGT</div><div class="t " style="left:2012px;top:436.80px;font-size:28px;color:#0f172a;letter-spacing:-1.2px;">ROUTE</div><div class="r" style="left:2199.5px;top:418px;width:64px;height:64px;border-radius:19px;background:#f8fafc;border:2px solid #e3e8ef;box-sizing:border-box;box-shadow:0 2px 3px rgba(15,23,42,0.06)"></div><svg class="ic" style="left:2215.5px;top:434px;width:32px;height:32px;" viewBox="0 0 24 24" fill="none" stroke="#0f172a" stroke-width="2" stroke-linecap="round" stroke-linejoin="round"><rect width="14" height="14" x="8" y="8" rx="2" ry="2"/><path d="M4 16c-1.1 0-2-.9-2-2V4c0-1.1.9-2 2-2h10c1.1 0 2 .9 2 2"/></svg><div class="r" style="left:2309.5px;top:418px;width:64px;height:64px;border-radius:19px;background:#f8fafc;border:2px solid #e3e8ef;box-sizing:border-box;box-shadow:0 2px 3px rgba(15,23,42,0.06)"></div><svg class="ic" style="left:2325.5px;top:434px;width:32px;height:32px;" viewBox="0 0 24 24" fill="none" stroke="#ef4444" stroke-width="2" stroke-linecap="round" stroke-linejoin="round"><path d="M3 6h18"/><path d="M19 6v14c0 1-1 2-2 2H7c-1 0-2-1-2-2V6"/><path d="M8 6V4c0-1 1-2 2-2h4c1 0 2 1 2 2v2"/><path d="M10 11v6"/><path d="M14 11v6"/></svg>
<div class="r" style="left:0px;top:492px;width:2402px;height:80px;background:#f8fafc"></div><div class="r" style="left:0px;top:572px;width:2402px;height:2px;background:#e2e8f0"></div><div class="r" style="left:16px;top:500px;width:64px;height:64px;border-radius:19px;background:#f8fafc;border:2px solid #e3e8ef;box-sizing:border-box;box-shadow:0 2px 3px rgba(15,23,42,0.06)"></div><svg class="ic" style="left:32px;top:516px;width:32px;height:32px;" viewBox="0 0 24 24" fill="none" stroke="#0f172a" stroke-width="2" stroke-linecap="round" stroke-linejoin="round"><path d="M21.174 6.812a1 1 0 0 0-3.986-3.987L3.842 16.174a2 2 0 0 0-.5.83l-1.321 4.352a.5.5 0 0 0 .623.622l4.353-1.32a2 2 0 0 0 .83-.497z"/></svg><div class="t" style="left:114.0px;width:160px;text-align:center;top:518.80px;font-size:28px;color:#3565c2;">1 Eng.</div><div class="t" style="left:276.70000000000005px;width:160px;text-align:center;top:518.80px;font-size:28px;color:#3565c2;">1 Class.</div><div class="t " style="left:450px;top:518.80px;font-size:28px;color:#0f172a;letter-spacing:0.6px;">13/09/2026</div><div class="t " style="left:654px;top:518.80px;font-size:28px;color:#0f172a;letter-spacing:0.35px;">Grand Prix Cycliste de Pins-Justaret</div><div class="t " style="left:1198px;top:518.80px;font-size:28px;color:#0f172a;letter-spacing:0.1px;">31860</div><div class="t " style="left:1333px;top:518.80px;font-size:28px;color:#5b6b82;letter-spacing:0.22px;">Vélo-Club CPRS Pins-Justaret/Vil...</div><div class="t " style="left:1822px;top:518.80px;font-size:28px;color:#0f172a;letter-spacing:-1.25px;">FSGT</div><div class="t " style="left:2012px;top:518.80px;font-size:28px;color:#0f172a;letter-spacing:-1.2px;">ROUTE</div><div class="r" style="left:2199.5px;top:500px;width:64px;height:64px;border-radius:19px;background:#f8fafc;border:2px solid #e3e8ef;box-sizing:border-box;box-shadow:0 2px 3px rgba(15,23,42,0.06)"></div><svg class="ic" style="left:2215.5px;top:516px;width:32px;height:32px;" viewBox="0 0 24 24" fill="none" stroke="#0f172a" stroke-width="2" stroke-linecap="round" stroke-linejoin="round"><rect width="14" height="14" x="8" y="8" rx="2" ry="2"/><path d="M4 16c-1.1 0-2-.9-2-2V4c0-1.1.9-2 2-2h10c1.1 0 2 .9 2 2"/></svg><div class="r" style="left:2309.5px;top:500px;width:64px;height:64px;border-radius:19px;background:#f8fafc;border:2px solid #e3e8ef;box-sizing:border-box;box-shadow:0 2px 3px rgba(15,23,42,0.06)"></div><svg class="ic" style="left:2325.5px;top:516px;width:32px;height:32px;" viewBox="0 0 24 24" fill="none" stroke="#ef4444" stroke-width="2" stroke-linecap="round" stroke-linejoin="round"><path d="M3 6h18"/><path d="M19 6v14c0 1-1 2-2 2H7c-1 0-2-1-2-2V6"/><path d="M8 6V4c0-1 1-2 2-2h4c1 0 2 1 2 2v2"/><path d="M10 11v6"/><path d="M14 11v6"/></svg>
<div class="r" style="left:0px;top:574px;width:2402px;height:80px;background:#f3f6fa"></div><div class="r" style="left:0px;top:654px;width:2402px;height:2px;background:#e2e8f0"></div><div class="r" style="left:16px;top:582px;width:64px;height:64px;border-radius:19px;background:#f8fafc;border:2px solid #e3e8ef;box-sizing:border-box;box-shadow:0 2px 3px rgba(15,23,42,0.06)"></div><svg class="ic" style="left:32px;top:598px;width:32px;height:32px;" viewBox="0 0 24 24" fill="none" stroke="#0f172a" stroke-width="2" stroke-linecap="round" stroke-linejoin="round"><path d="M21.174 6.812a1 1 0 0 0-3.986-3.987L3.842 16.174a2 2 0 0 0-.5.83l-1.321 4.352a.5.5 0 0 0 .623.622l4.353-1.32a2 2 0 0 0 .83-.497z"/></svg><div class="t" style="left:114.0px;width:160px;text-align:center;top:600.80px;font-size:28px;color:#3565c2;">Engager</div><div class="t" style="left:276.70000000000005px;width:160px;text-align:center;top:600.80px;font-size:28px;color:#3565c2;">Classer</div><div class="t " style="left:450px;top:600.80px;font-size:28px;color:#0f172a;letter-spacing:0.6px;">06/09/2026</div><div class="t " style="left:654px;top:600.80px;font-size:28px;color:#0f172a;letter-spacing:0.35px;">Trophée du Canton de Roquettes</div><div class="t " style="left:1198px;top:600.80px;font-size:28px;color:#0f172a;letter-spacing:0.1px;">31120</div><div class="t " style="left:1333px;top:600.80px;font-size:28px;color:#5b6b82;letter-spacing:0.22px;">-</div><div class="t " style="left:1822px;top:600.80px;font-size:28px;color:#0f172a;letter-spacing:-1.25px;">FSGT</div><div class="t " style="left:2012px;top:600.80px;font-size:28px;color:#0f172a;letter-spacing:-1.2px;">ROUTE</div><div class="r" style="left:2199.5px;top:582px;width:64px;height:64px;border-radius:19px;background:#f8fafc;border:2px solid #e3e8ef;box-sizing:border-box;box-shadow:0 2px 3px rgba(15,23,42,0.06)"></div><svg class="ic" style="left:2215.5px;top:598px;width:32px;height:32px;" viewBox="0 0 24 24" fill="none" stroke="#0f172a" stroke-width="2" stroke-linecap="round" stroke-linejoin="round"><rect width="14" height="14" x="8" y="8" rx="2" ry="2"/><path d="M4 16c-1.1 0-2-.9-2-2V4c0-1.1.9-2 2-2h10c1.1 0 2 .9 2 2"/></svg><div class="r" style="left:2309.5px;top:582px;width:64px;height:64px;border-radius:19px;background:#f8fafc;border:2px solid #e3e8ef;box-sizing:border-box;box-shadow:0 2px 3px rgba(15,23,42,0.06)"></div><svg class="ic" style="left:2325.5px;top:598px;width:32px;height:32px;" viewBox="0 0 24 24" fill="none" stroke="#ef4444" stroke-width="2" stroke-linecap="round" stroke-linejoin="round"><path d="M3 6h18"/><path d="M19 6v14c0 1-1 2-2 2H7c-1 0-2-1-2-2V6"/><path d="M8 6V4c0-1 1-2 2-2h4c1 0 2 1 2 2v2"/><path d="M10 11v6"/><path d="M14 11v6"/></svg>
<div class="r" style="left:0px;top:656px;width:2402px;height:80px;background:#f8fafc"></div><div class="r" style="left:0px;top:736px;width:2402px;height:2px;background:#e2e8f0"></div><div class="r" style="left:16px;top:664px;width:64px;height:64px;border-radius:19px;background:#f8fafc;border:2px solid #e3e8ef;box-sizing:border-box;box-shadow:0 2px 3px rgba(15,23,42,0.06)"></div><svg class="ic" style="left:32px;top:680px;width:32px;height:32px;" viewBox="0 0 24 24" fill="none" stroke="#0f172a" stroke-width="2" stroke-linecap="round" stroke-linejoin="round"><path d="M21.174 6.812a1 1 0 0 0-3.986-3.987L3.842 16.174a2 2 0 0 0-.5.83l-1.321 4.352a.5.5 0 0 0 .623.622l4.353-1.32a2 2 0 0 0 .83-.497z"/></svg><div class="t" style="left:114.0px;width:160px;text-align:center;top:682.80px;font-size:28px;color:#3565c2;">Engager</div><div class="t" style="left:276.70000000000005px;width:160px;text-align:center;top:682.80px;font-size:28px;color:#3565c2;">Classer</div><div class="t " style="left:450px;top:682.80px;font-size:28px;color:#0f172a;letter-spacing:0.6px;">05/09/2026</div><div class="t " style="left:654px;top:682.80px;font-size:28px;color:#0f172a;letter-spacing:0.35px;">Grand Prix Cycliste de Rieumes (Semi...</div><div class="t " style="left:1198px;top:682.80px;font-size:28px;color:#0f172a;letter-spacing:0.1px;">31370</div><div class="t " style="left:1333px;top:682.80px;font-size:28px;color:#5b6b82;letter-spacing:0.22px;">Association Cycliste Le Fousseret</div><div class="t " style="left:1822px;top:682.80px;font-size:28px;color:#0f172a;letter-spacing:-1.25px;">FSGT</div><div class="t " style="left:2012px;top:682.80px;font-size:28px;color:#0f172a;letter-spacing:-1.2px;">ROUTE</div><div class="r" style="left:2199.5px;top:664px;width:64px;height:64px;border-radius:19px;background:#f8fafc;border:2px solid #e3e8ef;box-sizing:border-box;box-shadow:0 2px 3px rgba(15,23,42,0.06)"></div><svg class="ic" style="left:2215.5px;top:680px;width:32px;height:32px;" viewBox="0 0 24 24" fill="none" stroke="#0f172a" stroke-width="2" stroke-linecap="round" stroke-linejoin="round"><rect width="14" height="14" x="8" y="8" rx="2" ry="2"/><path d="M4 16c-1.1 0-2-.9-2-2V4c0-1.1.9-2 2-2h10c1.1 0 2 .9 2 2"/></svg><div class="r" style="left:2309.5px;top:664px;width:64px;height:64px;border-radius:19px;background:#f8fafc;border:2px solid #e3e8ef;box-sizing:border-box;box-shadow:0 2px 3px rgba(15,23,42,0.06)"></div><svg class="ic" style="left:2325.5px;top:680px;width:32px;height:32px;" viewBox="0 0 24 24" fill="none" stroke="#ef4444" stroke-width="2" stroke-linecap="round" stroke-linejoin="round"><path d="M3 6h18"/><path d="M19 6v14c0 1-1 2-2 2H7c-1 0-2-1-2-2V6"/><path d="M8 6V4c0-1 1-2 2-2h4c1 0 2 1 2 2v2"/><path d="M10 11v6"/><path d="M14 11v6"/></svg>
<div class="r" style="left:0px;top:738px;width:2402px;height:80px;background:#f3f6fa"></div><div class="r" style="left:0px;top:818px;width:2402px;height:2px;background:#e2e8f0"></div><div class="r" style="left:16px;top:746px;width:64px;height:64px;border-radius:19px;background:#f8fafc;border:2px solid #e3e8ef;box-sizing:border-box;box-shadow:0 2px 3px rgba(15,23,42,0.06)"></div><svg class="ic" style="left:32px;top:762px;width:32px;height:32px;" viewBox="0 0 24 24" fill="none" stroke="#0f172a" stroke-width="2" stroke-linecap="round" stroke-linejoin="round"><path d="M21.174 6.812a1 1 0 0 0-3.986-3.987L3.842 16.174a2 2 0 0 0-.5.83l-1.321 4.352a.5.5 0 0 0 .623.622l4.353-1.32a2 2 0 0 0 .83-.497z"/></svg><div class="t" style="left:114.0px;width:160px;text-align:center;top:764.80px;font-size:28px;color:#3565c2;">4 Eng.</div><div class="t" style="left:276.70000000000005px;width:160px;text-align:center;top:764.80px;font-size:28px;color:#3565c2;">2 Class.</div><div class="t " style="left:450px;top:764.80px;font-size:28px;color:#0f172a;letter-spacing:0.6px;">30/08/2026</div><div class="t " style="left:654px;top:764.80px;font-size:28px;color:#0f172a;letter-spacing:0.35px;">Grand Prix Cycliste de la Ville de Balma</div><div class="t " style="left:1198px;top:764.80px;font-size:28px;color:#0f172a;letter-spacing:0.1px;">31130</div><div class="t " style="left:1333px;top:764.80px;font-size:28px;color:#5b6b82;letter-spacing:0.22px;">Balma Olympique Cyclisme</div><div class="t " style="left:1822px;top:764.80px;font-size:28px;color:#0f172a;letter-spacing:-1.25px;">FSGT</div><div class="t " style="left:2012px;top:764.80px;font-size:28px;color:#0f172a;letter-spacing:-1.2px;">ROUTE</div><div class="r" style="left:2199.5px;top:746px;width:64px;height:64px;border-radius:19px;background:#f8fafc;border:2px solid #e3e8ef;box-sizing:border-box;box-shadow:0 2px 3px rgba(15,23,42,0.06)"></div><svg class="ic" style="left:2215.5px;top:762px;width:32px;height:32px;" viewBox="0 0 24 24" fill="none" stroke="#0f172a" stroke-width="2" stroke-linecap="round" stroke-linejoin="round"><rect width="14" height="14" x="8" y="8" rx="2" ry="2"/><path d="M4 16c-1.1 0-2-.9-2-2V4c0-1.1.9-2 2-2h10c1.1 0 2 .9 2 2"/></svg><div class="r" style="left:2309.5px;top:746px;width:64px;height:64px;border-radius:19px;background:#f8fafc;border:2px solid #e3e8ef;box-sizing:border-box;box-shadow:0 2px 3px rgba(15,23,42,0.06)"></div><svg class="ic" style="left:2325.5px;top:762px;width:32px;height:32px;" viewBox="0 0 24 24" fill="none" stroke="#ef4444" stroke-width="2" stroke-linecap="round" stroke-linejoin="round"><path d="M3 6h18"/><path d="M19 6v14c0 1-1 2-2 2H7c-1 0-2-1-2-2V6"/><path d="M8 6V4c0-1 1-2 2-2h4c1 0 2 1 2 2v2"/><path d="M10 11v6"/><path d="M14 11v6"/></svg>
<div class="r" style="left:0px;top:820px;width:2402px;height:80px;background:#f8fafc"></div><div class="r" style="left:0px;top:900px;width:2402px;height:2px;background:#e2e8f0"></div><div class="r" style="left:16px;top:828px;width:64px;height:64px;border-radius:19px;background:#f8fafc;border:2px solid #e3e8ef;box-sizing:border-box;box-shadow:0 2px 3px rgba(15,23,42,0.06)"></div><svg class="ic" style="left:32px;top:844px;width:32px;height:32px;" viewBox="0 0 24 24" fill="none" stroke="#0f172a" stroke-width="2" stroke-linecap="round" stroke-linejoin="round"><path d="M21.174 6.812a1 1 0 0 0-3.986-3.987L3.842 16.174a2 2 0 0 0-.5.83l-1.321 4.352a.5.5 0 0 0 .623.622l4.353-1.32a2 2 0 0 0 .83-.497z"/></svg><div class="t" style="left:114.0px;width:160px;text-align:center;top:846.80px;font-size:28px;color:#3565c2;">Engager</div><div class="t" style="left:276.70000000000005px;width:160px;text-align:center;top:846.80px;font-size:28px;color:#3565c2;">Classer</div><div class="t " style="left:450px;top:846.80px;font-size:28px;color:#0f172a;letter-spacing:0.6px;">26/08/2026</div><div class="t " style="left:654px;top:846.80px;font-size:28px;color:#0f172a;letter-spacing:0.35px;">Challenge Nocturnes Candie - (Cat. 4 ...</div><div class="t " style="left:1198px;top:846.80px;font-size:28px;color:#0f172a;letter-spacing:0.1px;">31000</div><div class="t " style="left:1333px;top:846.80px;font-size:28px;color:#5b6b82;letter-spacing:0.22px;">Comité FSGT 31</div><div class="t " style="left:1822px;top:846.80px;font-size:28px;color:#0f172a;letter-spacing:-1.25px;">FSGT</div><div class="t " style="left:2012px;top:846.80px;font-size:28px;color:#0f172a;letter-spacing:-1.2px;">ROUTE</div><div class="r" style="left:2199.5px;top:828px;width:64px;height:64px;border-radius:19px;background:#f8fafc;border:2px solid #e3e8ef;box-sizing:border-box;box-shadow:0 2px 3px rgba(15,23,42,0.06)"></div><svg class="ic" style="left:2215.5px;top:844px;width:32px;height:32px;" viewBox="0 0 24 24" fill="none" stroke="#0f172a" stroke-width="2" stroke-linecap="round" stroke-linejoin="round"><rect width="14" height="14" x="8" y="8" rx="2" ry="2"/><path d="M4 16c-1.1 0-2-.9-2-2V4c0-1.1.9-2 2-2h10c1.1 0 2 .9 2 2"/></svg><div class="r" style="left:2309.5px;top:828px;width:64px;height:64px;border-radius:19px;background:#f8fafc;border:2px solid #e3e8ef;box-sizing:border-box;box-shadow:0 2px 3px rgba(15,23,42,0.06)"></div><svg class="ic" style="left:2325.5px;top:844px;width:32px;height:32px;" viewBox="0 0 24 24" fill="none" stroke="#ef4444" stroke-width="2" stroke-linecap="round" stroke-linejoin="round"><path d="M3 6h18"/><path d="M19 6v14c0 1-1 2-2 2H7c-1 0-2-1-2-2V6"/><path d="M8 6V4c0-1 1-2 2-2h4c1 0 2 1 2 2v2"/><path d="M10 11v6"/><path d="M14 11v6"/></svg>
<div class="r" style="left:0px;top:902px;width:2402px;height:80px;background:#f3f6fa"></div><div class="r" style="left:0px;top:982px;width:2402px;height:2px;background:#e2e8f0"></div><div class="r" style="left:16px;top:910px;width:64px;height:64px;border-radius:19px;background:#f8fafc;border:2px solid #e3e8ef;box-sizing:border-box;box-shadow:0 2px 3px rgba(15,23,42,0.06)"></div><svg class="ic" style="left:32px;top:926px;width:32px;height:32px;" viewBox="0 0 24 24" fill="none" stroke="#0f172a" stroke-width="2" stroke-linecap="round" stroke-linejoin="round"><path d="M21.174 6.812a1 1 0 0 0-3.986-3.987L3.842 16.174a2 2 0 0 0-.5.83l-1.321 4.352a.5.5 0 0 0 .623.622l4.353-1.32a2 2 0 0 0 .83-.497z"/></svg><div class="t" style="left:114.0px;width:160px;text-align:center;top:928.80px;font-size:28px;color:#3565c2;">Engager</div><div class="t" style="left:276.70000000000005px;width:160px;text-align:center;top:928.80px;font-size:28px;color:#3565c2;">Classer</div><div class="t " style="left:450px;top:928.80px;font-size:28px;color:#0f172a;letter-spacing:0.6px;">23/08/2026</div><div class="t " style="left:654px;top:928.80px;font-size:28px;color:#0f172a;letter-spacing:0.35px;">Course de Castres</div><div class="t " style="left:1198px;top:928.80px;font-size:28px;color:#0f172a;letter-spacing:0.1px;">81100</div><div class="t " style="left:1333px;top:928.80px;font-size:28px;color:#5b6b82;letter-spacing:0.22px;">Vélo-Sport Castrais</div><div class="t " style="left:1822px;top:928.80px;font-size:28px;color:#0f172a;letter-spacing:-1.25px;">FSGT</div><div class="t " style="left:2012px;top:928.80px;font-size:28px;color:#0f172a;letter-spacing:-1.2px;">ROUTE</div><div class="r" style="left:2199.5px;top:910px;width:64px;height:64px;border-radius:19px;background:#f8fafc;border:2px solid #e3e8ef;box-sizing:border-box;box-shadow:0 2px 3px rgba(15,23,42,0.06)"></div><svg class="ic" style="left:2215.5px;top:926px;width:32px;height:32px;" viewBox="0 0 24 24" fill="none" stroke="#0f172a" stroke-width="2" stroke-linecap="round" stroke-linejoin="round"><rect width="14" height="14" x="8" y="8" rx="2" ry="2"/><path d="M4 16c-1.1 0-2-.9-2-2V4c0-1.1.9-2 2-2h10c1.1 0 2 .9 2 2"/></svg><div class="r" style="left:2309.5px;top:910px;width:64px;height:64px;border-radius:19px;background:#f8fafc;border:2px solid #e3e8ef;box-sizing:border-box;box-shadow:0 2px 3px rgba(15,23,42,0.06)"></div><svg class="ic" style="left:2325.5px;top:926px;width:32px;height:32px;" viewBox="0 0 24 24" fill="none" stroke="#ef4444" stroke-width="2" stroke-linecap="round" stroke-linejoin="round"><path d="M3 6h18"/><path d="M19 6v14c0 1-1 2-2 2H7c-1 0-2-1-2-2V6"/><path d="M8 6V4c0-1 1-2 2-2h4c1 0 2 1 2 2v2"/><path d="M10 11v6"/><path d="M14 11v6"/></svg>
<div class="r" style="left:0px;top:984px;width:2402px;height:80px;background:#f8fafc"></div><div class="r" style="left:0px;top:1064px;width:2402px;height:2px;background:#e2e8f0"></div><div class="r" style="left:16px;top:992px;width:64px;height:64px;border-radius:19px;background:#f8fafc;border:2px solid #e3e8ef;box-sizing:border-box;box-shadow:0 2px 3px rgba(15,23,42,0.06)"></div><svg class="ic" style="left:32px;top:1008px;width:32px;height:32px;" viewBox="0 0 24 24" fill="none" stroke="#0f172a" stroke-width="2" stroke-linecap="round" stroke-linejoin="round"><path d="M21.174 6.812a1 1 0 0 0-3.986-3.987L3.842 16.174a2 2 0 0 0-.5.83l-1.321 4.352a.5.5 0 0 0 .623.622l4.353-1.32a2 2 0 0 0 .83-.497z"/></svg><div class="t" style="left:114.0px;width:160px;text-align:center;top:1010.80px;font-size:28px;color:#3565c2;">Engager</div><div class="t" style="left:276.70000000000005px;width:160px;text-align:center;top:1010.80px;font-size:28px;color:#3565c2;">Classer</div><div class="t " style="left:450px;top:1010.80px;font-size:28px;color:#0f172a;letter-spacing:0.6px;">19/08/2026</div><div class="t " style="left:654px;top:1010.80px;font-size:28px;color:#0f172a;letter-spacing:0.35px;">Challenge Nocturnes Candie - (Cat. 1/...</div><div class="t " style="left:1198px;top:1010.80px;font-size:28px;color:#0f172a;letter-spacing:0.1px;">31000</div><div class="t " style="left:1333px;top:1010.80px;font-size:28px;color:#5b6b82;letter-spacing:0.22px;">Comité FSGT 31</div><div class="t " style="left:1822px;top:1010.80px;font-size:28px;color:#0f172a;letter-spacing:-1.25px;">FSGT</div><div class="t " style="left:2012px;top:1010.80px;font-size:28px;color:#0f172a;letter-spacing:-1.2px;">ROUTE</div><div class="r" style="left:2199.5px;top:992px;width:64px;height:64px;border-radius:19px;background:#f8fafc;border:2px solid #e3e8ef;box-sizing:border-box;box-shadow:0 2px 3px rgba(15,23,42,0.06)"></div><svg class="ic" style="left:2215.5px;top:1008px;width:32px;height:32px;" viewBox="0 0 24 24" fill="none" stroke="#0f172a" stroke-width="2" stroke-linecap="round" stroke-linejoin="round"><rect width="14" height="14" x="8" y="8" rx="2" ry="2"/><path d="M4 16c-1.1 0-2-.9-2-2V4c0-1.1.9-2 2-2h10c1.1 0 2 .9 2 2"/></svg><div class="r" style="left:2309.5px;top:992px;width:64px;height:64px;border-radius:19px;background:#f8fafc;border:2px solid #e3e8ef;box-sizing:border-box;box-shadow:0 2px 3px rgba(15,23,42,0.06)"></div><svg class="ic" style="left:2325.5px;top:1008px;width:32px;height:32px;" viewBox="0 0 24 24" fill="none" stroke="#ef4444" stroke-width="2" stroke-linecap="round" stroke-linejoin="round"><path d="M3 6h18"/><path d="M19 6v14c0 1-1 2-2 2H7c-1 0-2-1-2-2V6"/><path d="M8 6V4c0-1 1-2 2-2h4c1 0 2 1 2 2v2"/><path d="M10 11v6"/><path d="M14 11v6"/></svg>
<div class="r" style="left:0px;top:1066px;width:2402px;height:80px;background:#f3f6fa"></div><div class="r" style="left:0px;top:1146px;width:2402px;height:2px;background:#e2e8f0"></div><div class="r" style="left:16px;top:1074px;width:64px;height:64px;border-radius:19px;background:#f8fafc;border:2px solid #e3e8ef;box-sizing:border-box;box-shadow:0 2px 3px rgba(15,23,42,0.06)"></div><svg class="ic" style="left:32px;top:1090px;width:32px;height:32px;" viewBox="0 0 24 24" fill="none" stroke="#0f172a" stroke-width="2" stroke-linecap="round" stroke-linejoin="round"><path d="M21.174 6.812a1 1 0 0 0-3.986-3.987L3.842 16.174a2 2 0 0 0-.5.83l-1.321 4.352a.5.5 0 0 0 .623.622l4.353-1.32a2 2 0 0 0 .83-.497z"/></svg><div class="t" style="left:114.0px;width:160px;text-align:center;top:1092.80px;font-size:28px;color:#3565c2;">Engager</div><div class="t" style="left:276.70000000000005px;width:160px;text-align:center;top:1092.80px;font-size:28px;color:#3565c2;">Classer</div><div class="t " style="left:450px;top:1092.80px;font-size:28px;color:#0f172a;letter-spacing:0.6px;">15/08/2026</div><div class="t " style="left:654px;top:1092.80px;font-size:28px;color:#0f172a;letter-spacing:0.35px;">Grand Prix Cycliste de Longages</div><div class="t " style="left:1198px;top:1092.80px;font-size:28px;color:#0f172a;letter-spacing:0.1px;">31410</div><div class="t " style="left:1333px;top:1092.80px;font-size:28px;color:#5b6b82;letter-spacing:0.22px;">Longages Espoir Cycliste</div><div class="t " style="left:1822px;top:1092.80px;font-size:28px;color:#0f172a;letter-spacing:-1.25px;">FSGT</div><div class="t " style="left:2012px;top:1092.80px;font-size:28px;color:#0f172a;letter-spacing:-1.2px;">ROUTE</div><div class="r" style="left:2199.5px;top:1074px;width:64px;height:64px;border-radius:19px;background:#f8fafc;border:2px solid #e3e8ef;box-sizing:border-box;box-shadow:0 2px 3px rgba(15,23,42,0.06)"></div><svg class="ic" style="left:2215.5px;top:1090px;width:32px;height:32px;" viewBox="0 0 24 24" fill="none" stroke="#0f172a" stroke-width="2" stroke-linecap="round" stroke-linejoin="round"><rect width="14" height="14" x="8" y="8" rx="2" ry="2"/><path d="M4 16c-1.1 0-2-.9-2-2V4c0-1.1.9-2 2-2h10c1.1 0 2 .9 2 2"/></svg><div class="r" style="left:2309.5px;top:1074px;width:64px;height:64px;border-radius:19px;background:#f8fafc;border:2px solid #e3e8ef;box-sizing:border-box;box-shadow:0 2px 3px rgba(15,23,42,0.06)"></div><svg class="ic" style="left:2325.5px;top:1090px;width:32px;height:32px;" viewBox="0 0 24 24" fill="none" stroke="#ef4444" stroke-width="2" stroke-linecap="round" stroke-linejoin="round"><path d="M3 6h18"/><path d="M19 6v14c0 1-1 2-2 2H7c-1 0-2-1-2-2V6"/><path d="M8 6V4c0-1 1-2 2-2h4c1 0 2 1 2 2v2"/><path d="M10 11v6"/><path d="M14 11v6"/></svg>
</div>
<div class="r" style="left:444px;top:1678px;width:2402px;height:2px;background:#e2e8f0"></div>
<div class="t " style="left:476.3px;top:1726.30px;font-size:28px;color:#64748b;letter-spacing:0.3px;">Lignes par page</div>
<div class="r" style="left:699px;top:1705px;width:138px;height:70px;border-radius:17px;background:#f8fafc;border:2px solid #e2e8f0;box-sizing:border-box;box-shadow:0 1px 3px rgba(15,23,42,0.05)"></div>
<div class="t " style="left:725.6px;top:1726.30px;font-size:28px;color:#64748b;">20</div>
<svg class="ic" style="left:779.7px;top:1723px;width:32px;height:32px;" viewBox="0 0 24 24" fill="none" stroke="#94a3b8" stroke-width="2" stroke-linecap="round" stroke-linejoin="round"><path d="m6 9 6 6 6-6"/></svg>
<div class="t " style="left:2162px;top:1726.30px;font-size:28px;color:#64748b;letter-spacing:0.25px;">1-20 sur 1139</div>
<div class="r" style="left:2354px;top:1708px;width:64px;height:64px;border-radius:19px;background:#f8fafc;border:2px solid #e5eaf0;box-sizing:border-box;box-shadow:0 1px 3px rgba(15,23,42,0.05)"></div><svg class="ic" style="left:2370px;top:1724px;width:32px;height:32px;" viewBox="0 0 24 24" fill="none" stroke="#737c8a" stroke-width="2" stroke-linecap="round" stroke-linejoin="round"><path d="m11 17-5-5 5-5"/><path d="m18 17-5-5 5-5"/></svg>
<div class="r" style="left:2426px;top:1708px;width:64px;height:64px;border-radius:19px;background:#f8fafc;border:2px solid #e5eaf0;box-sizing:border-box;box-shadow:0 1px 3px rgba(15,23,42,0.05)"></div><svg class="ic" style="left:2442px;top:1724px;width:32px;height:32px;" viewBox="0 0 24 24" fill="none" stroke="#737c8a" stroke-width="2" stroke-linecap="round" stroke-linejoin="round"><path d="m15 18-6-6 6-6"/></svg>
<div class="t " style="left:2514.6px;top:1726.30px;font-size:28px;color:#0f172a;letter-spacing:-0.45px;-webkit-text-stroke:0.3px #0f172a;">Page 1 / 57</div>
<div class="r" style="left:2678px;top:1708px;width:64px;height:64px;border-radius:19px;background:#f8fafc;border:2px solid #e5eaf0;box-sizing:border-box;box-shadow:0 1px 3px rgba(15,23,42,0.05)"></div><svg class="ic" style="left:2694px;top:1724px;width:32px;height:32px;" viewBox="0 0 24 24" fill="none" stroke="#0f172a" stroke-width="2" stroke-linecap="round" stroke-linejoin="round"><path d="m9 18 6-6-6-6"/></svg>
<div class="r" style="left:2750px;top:1708px;width:64px;height:64px;border-radius:19px;background:#f8fafc;border:2px solid #e5eaf0;box-sizing:border-box;box-shadow:0 1px 3px rgba(15,23,42,0.05)"></div><svg class="ic" style="left:2766px;top:1724px;width:32px;height:32px;" viewBox="0 0 24 24" fill="none" stroke="#0f172a" stroke-width="2" stroke-linecap="round" stroke-linejoin="round"><path d="m11 17-5-5 5-5"/><path d="m18 17-5-5 5-5"/></svg>
<div class="r" style="left:2760px;top:1680px;width:96px;height:96px;border-radius:50%;background:conic-gradient(from 0deg,#aee59a 0deg,#e8e482 40deg,#ffcf6e 80deg,#f8b868 120deg,#d8d838 160deg,#b4d424 200deg,#98c83a 235deg,#c4b866 270deg,#88c444 310deg,#aee59a 360deg);box-shadow:0 6px 12px rgba(15,23,42,0.22)"></div>
<svg class="ic" style="left:2758px;top:1678px;width:100px;height:100px;" viewBox="0 0 100 100">
<defs>
<linearGradient id="sky" x1="0" y1="0" x2="0" y2="1"><stop offset="0.08" stop-color="#66d4f4"/><stop offset="0.3" stop-color="#fff3b0"/><stop offset="0.5" stop-color="#ffc88e"/><stop offset="0.68" stop-color="#ff8a72"/></linearGradient>
<linearGradient id="isl" x1="0.8" y1="0.1" x2="0.3" y2="0.9"><stop offset="0" stop-color="#fff200"/><stop offset="0.5" stop-color="#b9d40a"/><stop offset="1" stop-color="#3f9a10"/></linearGradient>
<clipPath id="cc"><circle cx="50" cy="50" r="39.5"/></clipPath>
</defs>
<g clip-path="url(#cc)">
<rect x="0" y="0" width="100" height="100" fill="url(#sky)"/>
<circle cx="80" cy="22" r="14.5" fill="#ffab0a"/>
<g stroke="#ff7a10" stroke-width="1.4" stroke-linecap="round">
<path d="M60 10.5l2.5 0.5"/><path d="M59.5 15l2.5 0.6"/><path d="M60 19.5l2.3 1"/><path d="M61.5 24l2 1.3"/><path d="M63.5 28l1.6 1.6"/><path d="M66.5 31.5l1.2 1.8"/><path d="M70 34l0.6 2"/><path d="M73.5 35.5l0.3 2"/>
</g>
<rect x="0" y="64" width="100" height="40" fill="#0e8fa8"/>
<path d="M0 65 Q12 61 26 65 M62 65 Q76 61 100 65" stroke="#00cde6" stroke-width="3" fill="none"/>
<path d="M0 70 Q12 66 26 70 M62 70 Q76 66 100 70" stroke="#0a6f86" stroke-width="1.6" fill="none"/>
<path d="M0 74 Q12 70 26 74 M62 74 Q76 70 100 74" stroke="#0a6f86" stroke-width="1.6" fill="none"/>
<path d="M44 64 C43 54 42 46 42.5 36 L45.5 36 C47 46 49 54 51 64 Z" fill="#7a3f0a"/>
<ellipse cx="49" cy="87" rx="29" ry="26" fill="url(#isl)"/>
<g fill="#55c02c" stroke="#2f8a0e" stroke-width="1.1" stroke-linejoin="round">
<path d="M44 36 C37 28 29 27 21 29.5 C27 33 35 36 44 36Z"/>
<path d="M44 36 C34 35 26 42 24 52 C31 47 38 42 44 36Z"/>
<path d="M44 36 C38 42 35 51 36 59 C41 52 44 44 44 36Z"/>
<path d="M44 36 C45 29 49 24 57 23 C53 28 49 32 44 36Z"/>
<path d="M44 36 C52 32 59 35 62 42 C55 40 50 38 44 36Z"/>
<path d="M44 36 C50 40 55 46 55 53 C50 48 47 42 44 36Z"/>
</g>
<path d="M53 49 L68 56" stroke="#f0207a" stroke-width="3" stroke-linecap="round"/>
<path d="M53 49 L51 60 M58 52 L57 61 M67 56 L66 63" stroke="#111" stroke-width="1.2"/>
</g>
</svg>
</body></html>
